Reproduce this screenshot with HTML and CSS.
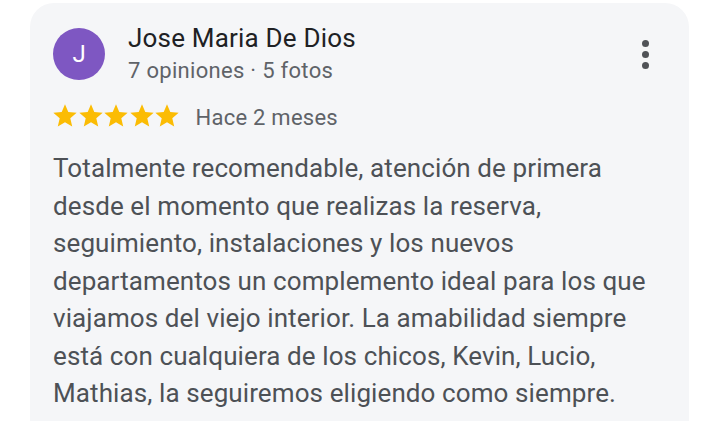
FILE: index.html
```html
<!DOCTYPE html>
<html lang="es">
<head>
<meta charset="utf-8">
<link rel="stylesheet" href="styles.css">
</head>
<body>
<div class="card">
  <div class="head">
    <div class="avatar">J</div>
    <div class="who">
      <div class="name">Jose Maria De Dios</div>
      <div class="meta">7 opiniones · 5 fotos</div>
    </div>
    <div class="more"><span></span><span></span><span></span></div>
  </div>
  <div class="rating">
    <div class="stars">
      <svg viewBox="0 0 24 24"><path d="M12 17.27L18.18 21l-1.64-7.03L22 9.24l-7.19-.61L12 2 9.19 8.63 2 9.24l5.46 4.73L5.82 21z"/></svg>
      <svg viewBox="0 0 24 24"><path d="M12 17.27L18.18 21l-1.64-7.03L22 9.24l-7.19-.61L12 2 9.19 8.63 2 9.24l5.46 4.73L5.82 21z"/></svg>
      <svg viewBox="0 0 24 24"><path d="M12 17.27L18.18 21l-1.64-7.03L22 9.24l-7.19-.61L12 2 9.19 8.63 2 9.24l5.46 4.73L5.82 21z"/></svg>
      <svg viewBox="0 0 24 24"><path d="M12 17.27L18.18 21l-1.64-7.03L22 9.24l-7.19-.61L12 2 9.19 8.63 2 9.24l5.46 4.73L5.82 21z"/></svg>
      <svg viewBox="0 0 24 24"><path d="M12 17.27L18.18 21l-1.64-7.03L22 9.24l-7.19-.61L12 2 9.19 8.63 2 9.24l5.46 4.73L5.82 21z"/></svg>
    </div>
    <span class="date">Hace 2 meses</span>
  </div>
  <p class="text">Totalmente recomendable, atención de primera<br>desde el momento que realizas la reserva,<br>seguimiento, instalaciones y los nuevos<br>departamentos un complemento ideal para los que<br>viajamos del viejo interior. La amabilidad siempre<br>está con cualquiera de los chicos, Kevin, Lucio,<br>Mathias, la seguiremos eligiendo como siempre.</p>
</div>
</body>
</html>
```
FILE: styles.css
```css
html, body {
  margin: 0;
  padding: 0;
  background: #ffffff;
  overflow: hidden;
}
body {
  font-family: Roboto, "Liberation Sans", sans-serif;
  padding: 3px 31px 0 30px;
}
.card {
  background: #f5f6f8;
  border-radius: 24px 24px 0 0;
  padding: 25px 23px 0 23px;
  height: 430px;
  box-sizing: border-box;
}
.head {
  display: flex;
  align-items: flex-start;
}
.avatar {
  width: 52px;
  height: 52px;
  border-radius: 50%;
  background: #7e57c2;
  color: #fff;
  font-size: 24px;
  display: flex;
  align-items: center;
  justify-content: center;
  flex-shrink: 0;
}
.who {
  margin-left: 23px;
  margin-top: -6px;
  flex: 1;
}
.name {
  font-size: 26px;
  letter-spacing: 0.2px;
  color: #202124;
  line-height: 32px;
}
.meta {
  font-size: 22px;
  letter-spacing: 0.3px;
  color: #5f6368;
  line-height: 34px;
}
.more {
  display: flex;
  flex-direction: column;
  gap: 4px;
  margin-top: 12px;
  margin-right: 17px;
}
.more span {
  width: 7px;
  height: 7px;
  border-radius: 50%;
  background: #505357;
}
.rating {
  display: flex;
  align-items: center;
  margin-top: 14px;
}
.stars {
  display: flex;
  gap: 0;
  margin-left: -2px;
  margin-bottom: 3px;
}
.stars svg {
  width: 28px;
  height: 28px;
  fill: #fbbc04;
  margin-right: -2.5px;
}
.date {
  margin-left: 17px;
  font-size: 22px;
  letter-spacing: 0.25px;
  color: #5f6368;
}
.text {
  margin: 17px 0 0 0;
  font-size: 26px;
  letter-spacing: 0.1px;
  line-height: 37.5px;
  color: #4d5156;
}
```
